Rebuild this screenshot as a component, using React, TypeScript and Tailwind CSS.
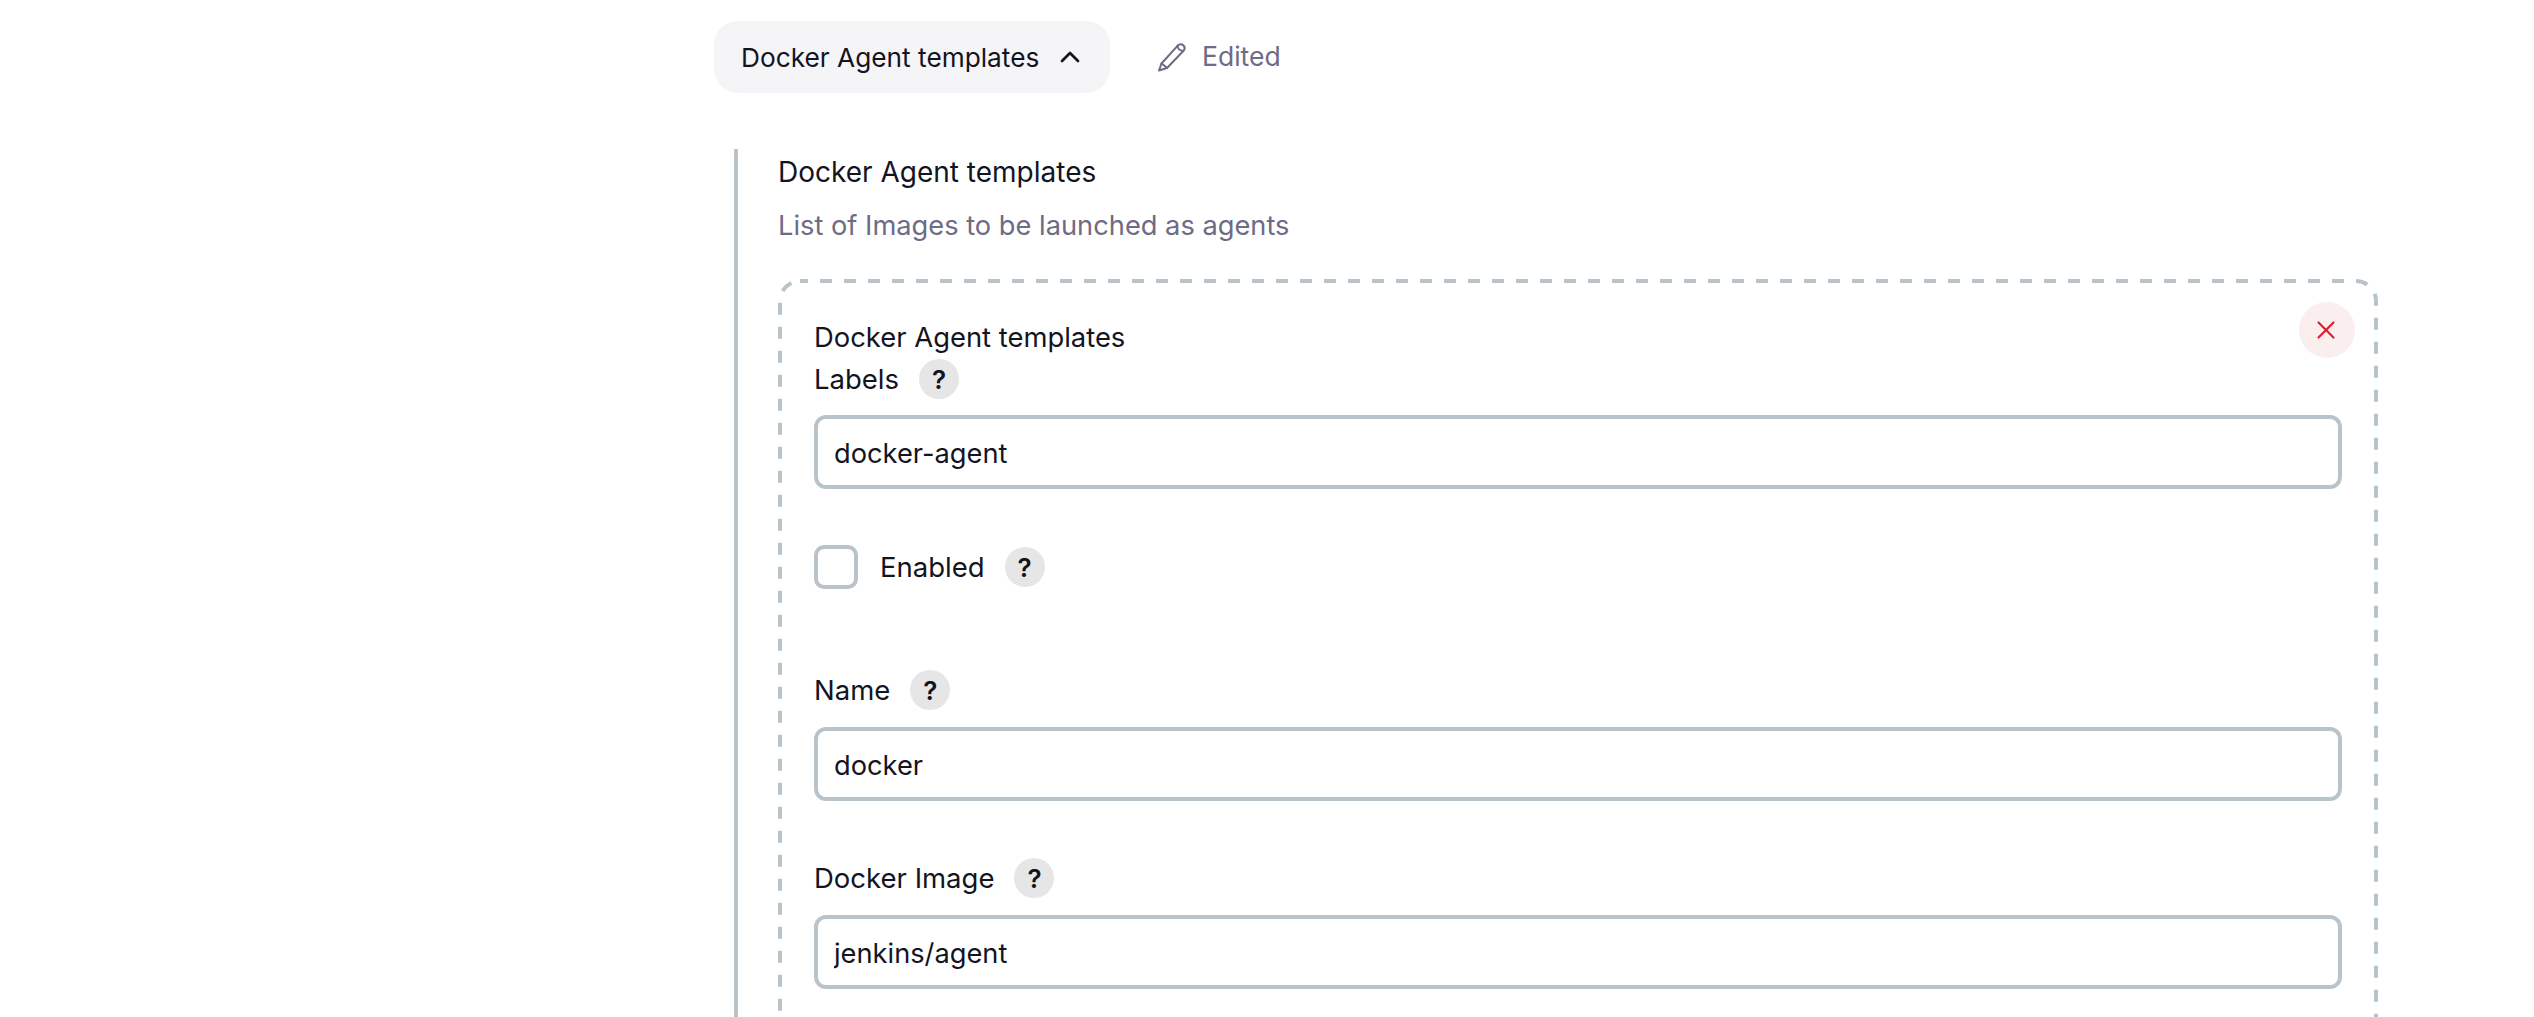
import { ChevronUp, X } from "lucide-react";

const Help = () => (
  <span className="flex h-[40px] w-[40px] shrink-0 items-center justify-center rounded-full bg-[#e6e6e6] text-[26px] font-semibold text-[#14141f]">?</span>
);

const Label = ({ text }: { text: string }) => (
  <div className="flex h-[40px] items-center gap-[20px] text-[27.5px] text-[#14141f]">
    <span className="translate-y-[1px]">{text}</span>
    <Help />
  </div>
);

const TextInput = ({ value }: { value: string }) => (
  <input
    readOnly
    value={value}
    className="mt-[17px] block h-[74px] w-full rounded-[12px] border-[4px] border-[#b9c4ca] bg-white px-[16px] pt-[2px] text-[27.25px] text-[#14141f] outline-none"
  />
);

const PencilIcon = () => (
  <svg width="30" height="30" viewBox="0 0 30 30" fill="none" stroke="currentColor" strokeWidth="2" strokeLinejoin="round" strokeLinecap="round" aria-hidden="true">
    <path d="M2 28.5 L4.5 21.5 L20.5 3.8 C22.5 1.8 25 2 26.5 3.5 C28 5 28 7.2 26.3 9 L10 26 Z" />
    <path d="M20.5 3.8 C20.6 6.5 23 8.8 26.3 9" />
    <path d="M4.5 21.5 C6 22.5 8.5 24.5 10 26" />
  </svg>
);

export default function App() {
  return (
    <div className="h-[1017px] overflow-hidden bg-white pl-[714px] pt-[21px] font-['Inter',sans-serif] text-[#14141f]">
      <div className="flex items-center">
        <button className="flex h-[72px] w-[396px] items-center gap-[15px] rounded-[24px] bg-[#f5f5f7] pl-[27px] text-[26.25px]">
          <span className="translate-y-[1px]">Docker Agent templates</span>
          <ChevronUp size={32} strokeWidth={2} />
        </button>
        <div className="ml-[47px] flex items-center gap-[15px] text-[26.5px] text-[#6d6b85]">
          <PencilIcon />
          <span>Edited</span>
        </div>
      </div>

      <section className="ml-[20px] mt-[56px] w-[1644px] border-l-[4px] border-[#b9c4ca] pl-[40px]">
        <div className="flex h-[45px] items-center pt-[1px] text-[28px]">Docker Agent templates</div>
        <div className="mt-[8px] flex h-[46px] items-center pt-[2px] text-[27.25px] text-[#6d6b85]">List of Images to be launched as agents</div>

        <div className="relative mt-[31px] px-[36px] pb-[60px] pt-[38px]">
          <svg className="absolute inset-0 h-full w-full" aria-hidden="true">
            <rect x="2" y="2" width="1596" height="100%" rx="20" fill="none" stroke="#b9c4ca" strokeWidth="4" strokeDasharray="12 12" strokeDashoffset="4" />
          </svg>
          <button className="absolute right-[23px] top-[23px] flex h-[56px] w-[56px] items-center justify-center rounded-full bg-[#fbeeee] text-[#e6192e]">
            <X className="-translate-x-[1px]" size={30} strokeWidth={1.7} />
          </button>
          <div className="flex h-[40px] items-center pt-[2px] text-[27.4px]">Docker Agent templates</div>
          <div className="-mb-[1px] mt-[2px]">
            <Label text="Labels" />
          </div>
          <TextInput value="docker-agent" />

          <div className="mt-[56px] flex h-[44px] items-center">
            <span className="h-[44px] w-[44px] rounded-[10px] border-[4px] border-[#b9c4ca] bg-white" />
            <span className="ml-[22px] translate-y-[1px] text-[27.5px]">Enabled</span>
            <span className="ml-[20px]"><Help /></span>
          </div>

          <div className="mt-[81px]">
            <Label text="Name" />
          </div>
          <TextInput value="docker" />

          <div className="mt-[57px]">
            <Label text="Docker Image" />
          </div>
          <TextInput value="jenkins/agent" />
        </div>
      </section>
    </div>
  );
}
